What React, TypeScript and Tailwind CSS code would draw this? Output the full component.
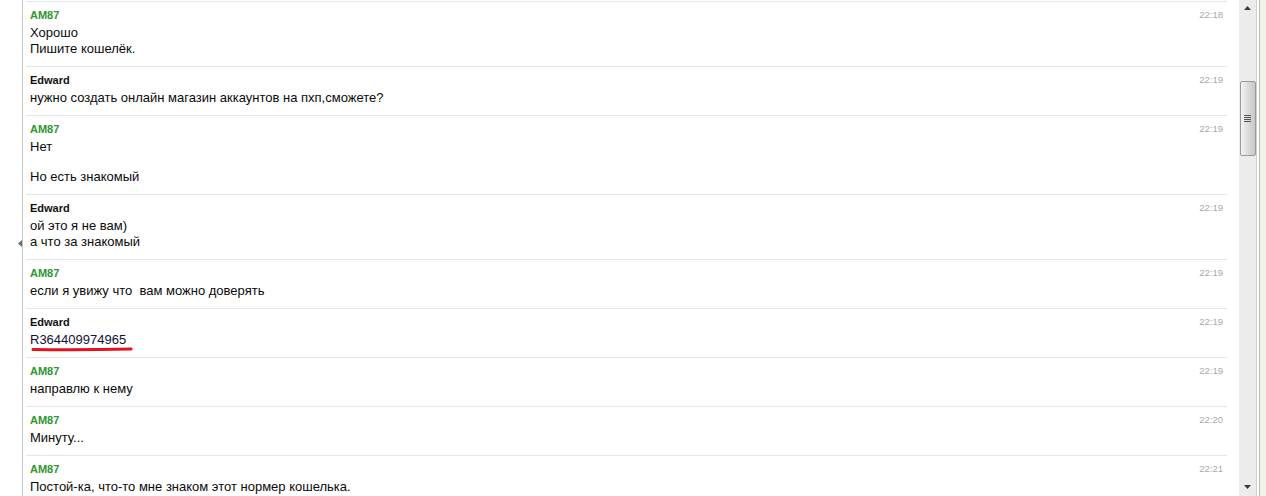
import React from "react";

type Msg = {
  name: string;
  time: string;
  lines: (string | null)[];
  mark?: boolean;
};

const msgs: Msg[] = [
  { name: "AM87", time: "22:18", lines: ["Хорошо", "Пишите кошелёк."] },
  { name: "Edward", time: "22:19", lines: ["нужно создать онлайн магазин аккаунтов на пхп,сможете?"] },
  { name: "AM87", time: "22:19", lines: ["Нет", null, "Но есть знакомый"] },
  { name: "Edward", time: "22:19", lines: ["ой это я не вам)", "а что за знакомый"] },
  { name: "AM87", time: "22:19", lines: ["если я увижу что\u00a0 вам можно доверять"] },
  { name: "Edward", time: "22:19", lines: ["R364409974965"], mark: true },
  { name: "AM87", time: "22:19", lines: ["направлю к нему"] },
  { name: "AM87", time: "22:20", lines: ["Минуту..."] },
  { name: "AM87", time: "22:21", lines: ["Постой-ка, что-то мне знаком этот нормер кошелька."] },
];

function Row({ m }: { m: Msg }) {
  const green = m.name === "AM87";
  return (
    <div className="border-t border-[#e6e6e6] pt-[6px] pb-[9px] px-[4px]">
      <div className="flex items-center justify-between h-[14px]">
        <span
          className={
            "text-[11px] font-bold leading-[14px] " +
            (green ? "text-[#2e962e]" : "text-[#111111]")
          }
        >
          {m.name}
        </span>
        <span className="text-[9.5px] leading-[14px] text-[#a9a9a9]">{m.time}</span>
      </div>
      <div className="mt-[3px] text-[13px] leading-[16px] text-[#0a0a0a]">
        {m.lines.map((l, i) =>
          l === null ? (
            <div key={i} className="h-[14px]" />
          ) : m.mark ? (
            <div key={i} className="relative">
              <span className="text-[#111133]">{l}</span>
              <svg
                className="absolute left-[1px] top-[14px]"
                width="104"
                height="6"
                viewBox="0 0 104 6"
              >
                <path
                  d="M2 3.4 C 30 3.8, 70 3.6, 100 3.0"
                  stroke="#e3121c"
                  strokeWidth="3"
                  strokeLinecap="round"
                  fill="none"
                />
              </svg>
            </div>
          ) : (
            <div key={i}>{l}</div>
          )
        )}
      </div>
    </div>
  );
}

export default function App() {
  return (
    <div className="w-[1266px] h-[496px] overflow-hidden flex bg-white font-['Liberation_Sans',Arial,sans-serif]">
      {/* left gutter */}
      <div className="relative w-[22px] shrink-0">
        <svg className="absolute left-[18px] top-[240px]" width="4" height="7" viewBox="0 0 4 7">
          <path d="M4 0 L0 3.5 L4 7 Z" fill="#6b6b6b" />
        </svg>
      </div>
      <div className="w-[1px] shrink-0 bg-[#c6c6c6]" />
      {/* messages */}
      <div className="flex-1 pl-[3px] pr-[12px] pt-[1px]">
        {msgs.map((m, i) => (
          <Row key={i} m={m} />
        ))}
      </div>
      {/* scrollbar */}
      <div className="w-[17px] shrink-0 bg-[#ececec] flex flex-col items-center">
        <div className="h-[16px] flex items-center justify-center">
          <svg width="7" height="4" viewBox="0 0 7 4">
            <path d="M3.5 0 L7 4 L0 4 Z" fill="#3a3a3a" />
          </svg>
        </div>
        <div className="mt-[65px] w-[16px] h-[75px] rounded-[2px] border border-[#9a9a9a] bg-gradient-to-r from-[#f4f4f4] via-[#dcdcdc] to-[#c8c8c8] flex items-center justify-center">
          <div className="flex flex-col gap-[1px]">
            <div className="w-[7px] h-[1px] bg-[#555]" />
            <div className="w-[7px] h-[1px] bg-[#555]" />
            <div className="w-[7px] h-[1px] bg-[#555]" />
            <div className="w-[7px] h-[1px] bg-[#555]" />
          </div>
        </div>
        <div className="flex-1" />
        <div className="h-[18px] flex items-center justify-center">
          <svg width="7" height="4" viewBox="0 0 7 4">
            <path d="M0 0 L7 0 L3.5 4 Z" fill="#3a3a3a" />
          </svg>
        </div>
      </div>
      {/* right edge */}
      <div className="w-[1px] shrink-0 bg-[#d2d2d2]" />
      <div className="w-[2px] shrink-0 bg-white" />
      <div className="w-[1px] shrink-0 bg-[#b7bbad]" />
      <div className="w-[6px] shrink-0 bg-[#eef2e7]" />
    </div>
  );
}
